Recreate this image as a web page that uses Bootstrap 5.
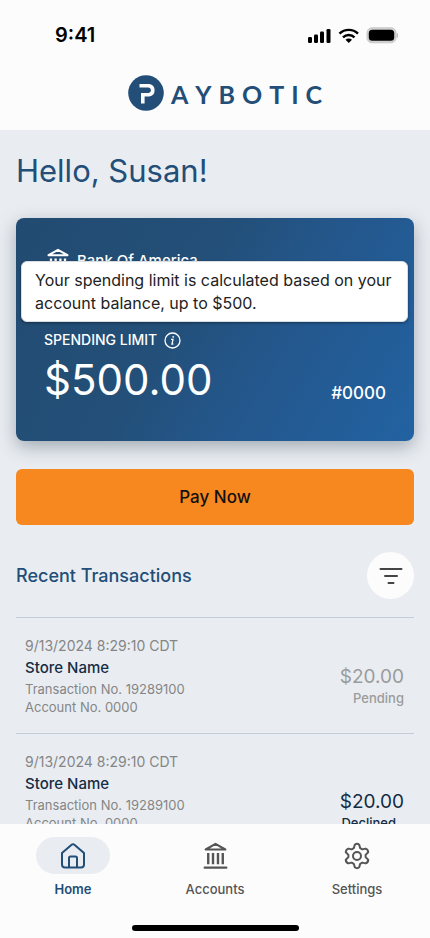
<!DOCTYPE html>
<html lang="en">
<head>
<meta charset="utf-8">
<meta name="viewport" content="width=device-width, initial-scale=1">
<title>Paybotic</title>
<link rel="stylesheet" href="https://cdn.jsdelivr.net/npm/bootstrap@5.3.0/dist/css/bootstrap.min.css">
<style>
  body { font-family: Inter, Roboto, sans-serif; background: #e9edf2; color: #142c44; }
  .surface { background: #fcfcfc; }
  .navy { color: #224e78; }
  .status-bar { height: 68px; padding: 2px 32px 0 55px; }
  .clock { font-size: 20px; font-weight: 600; line-height: 24px; color: #000; }
  .brand-bar { height: 62px; padding: 7px 0 0; }
  .wordmark { font-family: Lato, sans-serif; font-size: 25px; font-weight: 700; line-height: 28px; gap: 7px; padding-top: 5px; }
  .brand-group { padding-left: 20px; gap: 7px; }
  .scroll-area { min-height: 0; overflow-y: auto; scrollbar-width: none; }
  .greeting { font-size: 31px; font-weight: 400; line-height: 40px; padding-top: 21px; margin-bottom: 27px; }
  .limit-card { background: linear-gradient(120deg, #224b71 0%, #234f78 40%, #24568a 60%, #2262a2 100%); border-radius: 8px; padding: 28px 28px 33px; box-shadow: 0 6px 18px rgba(30, 45, 60, .35); }
  .bank-name { font-size: 15px; font-weight: 500; line-height: 26px; gap: 7px; padding-left: 2px; margin-bottom: 54px; padding-top: 2px; }
  .limit-label { font-size: 14px; font-weight: 500; line-height: 24px; gap: 7px; }
  .limit-amount { font-size: 42px; font-weight: 400; line-height: 56px; }
  .account-tag { font-size: 17px; font-weight: 500; line-height: 24px; padding-top: 29px; }
  .limit-tip { top: 43px; left: 5px; right: 6px; padding: 7px 13px 6px; background: #fff; color: #222; border: 1px solid #d8dde2; border-radius: 6px; font-size: 16px; line-height: 23px; box-shadow: 0 1px 3px rgba(0, 0, 0, .4); }
  .pay-button { background: #f6881f; color: #111; border: 0; border-radius: 6px; font-size: 17px; font-weight: 500; line-height: 24px; padding: 16px; margin-top: 28px; }
  .pay-button:hover { background: #e57b14; color: #111; }
  .section-head { padding: 27px 0 18px; }
  .section-title { font-size: 18px; font-weight: 500; line-height: 24px; }
  .filter-button { width: 47px; height: 47px; border: 0; }
  .entry { border-top: 1px solid #c2cdd9; padding: 18px 10px 17px 9px; }
  .meta { font-size: 13px; line-height: 18px; color: #858585; }
  .date { font-size: 14px; line-height: 20px; }
  .store { font-size: 15px; font-weight: 500; line-height: 24px; }
  .entry-total { padding-top: 20px; }
  .amount { font-size: 19px; line-height: 24px; }
  .state { font-size: 13px; font-weight: 500; line-height: 19px; }
  .pending { color: #9b9b9b; }
  .declined-info { padding-bottom: 18px; }
  .tab-bar { padding: 13px 2px 0; }
  .tab-link { color: #555; font-size: 13px; font-weight: 500; line-height: 20px; gap: 5px; }
  .tab-link.active { color: #224e78; font-weight: 600; }
  .tab-icon { width: 74px; height: 37px; }
  .active .tab-icon { background: #e9edf2; }
  .home-bar { width: 167px; height: 6px; background: #000; margin: 26px auto 7px; }
</style>
</head>
<body>
<svg class="d-none">
  <symbol id="bank" viewBox="0 0 24 26">
    <path d="M2.500 7.200 12 1.800l9.500 5.400Z" fill="none" stroke="currentColor" stroke-width="2" stroke-linejoin="round"/>
    <path d="M5 10.500v11M9.600 10.500v11M14.400 10.500v11M19 10.500v11" stroke="currentColor" stroke-width="2.300"/>
    <path d="M1.500 24.700h21" stroke="currentColor" stroke-width="2" stroke-linecap="round"/>
  </symbol>
</svg>
<div class="vh-100 d-flex flex-column">
  <header class="surface flex-shrink-0">
    <div class="status-bar d-flex align-items-center justify-content-between">
      <span class="clock">9:41</span>
      <svg width="92" height="18" viewBox="0 0 92 18" aria-label="Signal, Wi-Fi and battery">
        <g><rect x="2" y="11" width="4" height="6" rx="1.300"/><rect x="8" y="8.500" width="4" height="8.500" rx="1.300"/><rect x="14" y="5.500" width="4" height="11.500" rx="1.300"/><rect x="20.500" y="3" width="4" height="14" rx="1.300"/></g>
        <g fill="none" stroke="#000" stroke-width="2.400"><path d="M33.500 7.700a13.200 13.200 0 0 1 18.500 0"/><path d="M37 11.300a8.300 8.300 0 0 1 11.500 0"/></g>
        <path d="M39.500 13.700a4.700 4.700 0 0 1 6.500 0l-3.250 3.300z"/>
        <rect x="61" y="1.800" width="29" height="15" rx="5" fill="#d0d0d0" stroke="#c8c8c8"/>
        <rect x="62.800" y="3.800" width="25.400" height="11" rx="3.500"/>
        <path d="M91.300 7.500v4" stroke="#bbb" stroke-width="1.300"/>
      </svg>
    </div>
    <div class="brand-bar navy">
      <div class="brand-group d-flex justify-content-center align-items-start">
        <svg class="flex-shrink-0" width="36" height="36" viewBox="0 0 36 36" aria-hidden="true">
          <circle cx="18" cy="18" r="17.800" fill="#224e78"/>
          <path d="M11.500 10.800H21Q24.800 11.500 24.800 15.300T21 19.800H14.800V28.500" fill="none" stroke="#fcfcfc" stroke-width="3.600"/>
        </svg>
        <div class="wordmark d-flex" role="img" aria-label="Paybotic"><span>A</span><span>Y</span><span>B</span><span>O</span><span>T</span><span>I</span><span>C</span></div>
      </div>
    </div>
  </header>

  <main class="scroll-area flex-grow-1 px-3">
    <h1 class="greeting navy">Hello, Susan!</h1>
    <section class="limit-card position-relative text-white">
      <div class="bank-name d-flex align-items-end">
        <svg class="flex-shrink-0" width="24" height="26"><use href="#bank"/></svg>
        <span>Bank Of America</span>
      </div>
      <div class="limit-label d-flex align-items-center">
        <span>SPENDING LIMIT</span>
        <button class="btn p-0 border-0 text-white d-flex" type="button" aria-label="About the spending limit" aria-describedby="limit-tip">
          <svg width="17" height="17" viewBox="0 0 17 17" fill="none" stroke="currentColor"><circle cx="8.500" cy="8.500" r="7.500" stroke-width="1.300"/><path d="M7 7.300h2L8 12h1.300" stroke-width="1.300"/><circle cx="9.200" cy="4.900" r=".6" fill="currentColor" stroke-width=".6"/></svg>
        </button>
      </div>
      <div class="d-flex justify-content-between align-items-start">
        <span class="limit-amount">$500.00</span>
        <span class="account-tag">#0000</span>
      </div>
      <div class="limit-tip position-absolute" id="limit-tip" role="tooltip">Your spending limit is calculated based on your account balance, up to $500.</div>
    </section>
    <button class="btn pay-button w-100" type="button">Pay Now</button>

    <section>
      <div class="section-head d-flex justify-content-between align-items-center">
        <h2 class="section-title navy mb-0">Recent Transactions</h2>
        <button class="btn filter-button surface rounded-circle p-0 d-flex align-items-center justify-content-center" type="button" aria-label="Filter transactions">
          <svg width="24" height="20" viewBox="0 0 24 20" fill="none" stroke="#444" stroke-width="2" stroke-linecap="round"><path d="M1.500 3h21M6 10h12M9.500 17h5"/></svg>
        </button>
      </div>
      <ul class="list-unstyled mb-0">
        <li class="entry d-flex justify-content-between align-items-center">
          <div>
            <div class="meta date">9/13/2024 8:29:10 CDT</div>
            <div class="store">Store Name</div>
            <div class="meta">Transaction No. 19289100</div>
            <div class="meta">Account No. 0000</div>
          </div>
          <div class="entry-total text-end pending">
            <div class="amount">$20.00</div>
            <div class="state">Pending</div>
          </div>
        </li>
        <li class="entry d-flex justify-content-between align-items-center">
          <div class="declined-info">
            <div class="meta date">9/13/2024 8:29:10 CDT</div>
            <div class="store">Store Name</div>
            <div class="meta">Transaction No. 19289100</div>
            <div class="meta">Account No. 0000</div>
          </div>
          <div class="entry-total text-end">
            <div class="amount">$20.00</div>
            <div class="state pe-2">Declined</div>
          </div>
        </li>
      </ul>
    </section>
  </main>

  <footer class="surface flex-shrink-0">
    <nav class="tab-bar row g-0" aria-label="Main">
      <a class="tab-link active col d-flex flex-column align-items-center text-decoration-none" href="#home" aria-current="page">
        <span class="tab-icon rounded-pill d-flex align-items-center justify-content-center">
          <svg width="26" height="28" viewBox="0 0 26 28" fill="none" stroke="currentColor" stroke-width="2" stroke-linejoin="round"><path d="M2 11 11.600 2.800q1.400-1.200 2.800 0L24 11v11.500a3 3 0 0 1-3 3H5a3 3 0 0 1-3-3Z"/><path d="M9 25.500V16a1.500 1.500 0 0 1 1.500-1.500h5A1.500 1.500 0 0 1 17 16v9.500"/></svg>
        </span>
        Home
      </a>
      <a class="tab-link col d-flex flex-column align-items-center text-decoration-none" href="#accounts">
        <span class="tab-icon d-flex align-items-center justify-content-center"><svg width="25" height="27"><use href="#bank"/></svg></span>
        Accounts
      </a>
      <a class="tab-link col d-flex flex-column align-items-center text-decoration-none" href="#settings">
        <span class="tab-icon d-flex align-items-center justify-content-center">
          <svg width="26" height="28" viewBox="0 0 26 28" fill="none" stroke="currentColor" stroke-width="2" stroke-linejoin="round"><path d="M10.800 2.700Q13 .9 15.200 2.700L16.200 6.200 18.300 7.400 21.600 6.600Q24.300 7.700 24.200 10.300L21.600 12.900V15.100L24.200 17.700Q24.300 20.300 21.600 21.400L18.300 20.600 16.200 21.800 15.200 25.300Q13 27.100 10.800 25.300L9.800 21.800 7.700 20.600 4.400 21.400Q1.700 20.300 1.800 17.700L4.400 15.100V12.900L1.800 10.300Q1.700 7.700 4.400 6.600L7.700 7.400 9.800 6.200Z"/><circle cx="13" cy="14" r="4"/></svg>
        </span>
        Settings
      </a>
    </nav>
    <div class="home-bar rounded-pill"></div>
  </footer>
</div>
<script src="https://cdn.jsdelivr.net/npm/bootstrap@5.3.0/dist/js/bootstrap.bundle.min.js"></script>
</body>
</html>
